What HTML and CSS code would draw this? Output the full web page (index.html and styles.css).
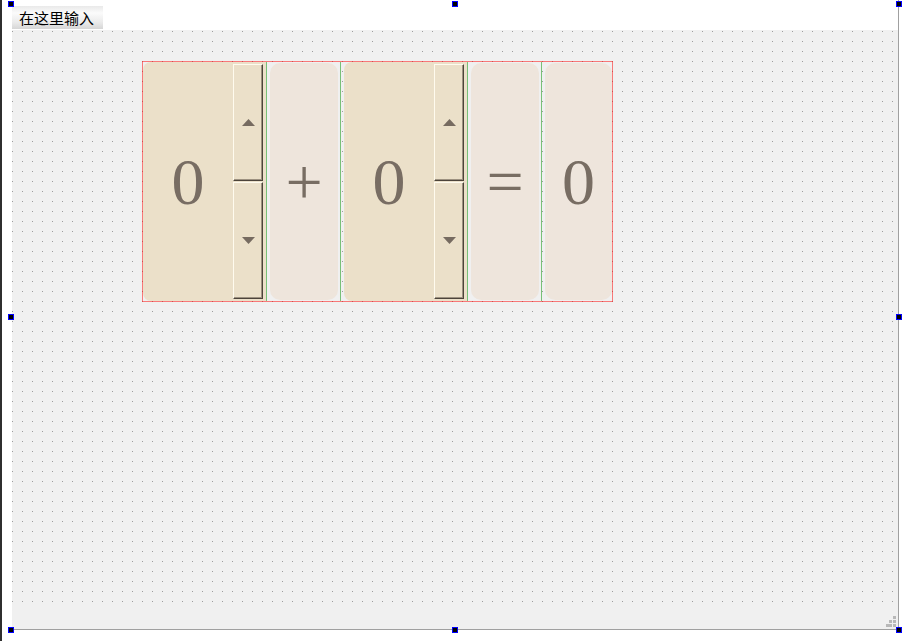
FILE: index.html
```html
<!DOCTYPE html>
<html>
<head>
<meta charset="utf-8">
<link rel="stylesheet" href="styles.css">
</head>
<body>
<div class="screen">
  <div class="edge"></div>
  <div class="canvas">
    <div class="form">
      <div class="menubar"><span class="menu-item">在这里输入</span></div>
      <div class="central">
        <div class="calc">
          <div class="spin">
            <div class="spin-text">0</div>
            <div class="spin-btns">
              <div class="spin-btn up"><svg width="13" height="7" viewBox="0 0 13 7"><polygon points="0,7 6.5,0 13,7" fill="#766b60"/></svg></div>
              <div class="spin-btn down"><svg width="13" height="7" viewBox="0 0 13 7"><polygon points="0,0 13,0 6.5,7" fill="#766b60"/></svg></div>
            </div>
          </div>
          <div class="vline"></div>
          <div class="gap g3"></div>
          <div class="label l68">+</div>
          <div class="gap g2"></div>
          <div class="vline"></div>
          <div class="gap g3"></div>
          <div class="spin">
            <div class="spin-text">0</div>
            <div class="spin-btns">
              <div class="spin-btn up"><svg width="13" height="7" viewBox="0 0 13 7"><polygon points="0,7 6.5,0 13,7" fill="#766b60"/></svg></div>
              <div class="spin-btn down"><svg width="13" height="7" viewBox="0 0 13 7"><polygon points="0,0 13,0 6.5,7" fill="#766b60"/></svg></div>
            </div>
          </div>
          <div class="vline"></div>
          <div class="gap g3"></div>
          <div class="label l68">=</div>
          <div class="gap g2"></div>
          <div class="vline"></div>
          <div class="gap g3"></div>
          <div class="label l67">0</div>
        </div>
      </div>
      <div class="statusbar">
        <svg class="grip" width="12" height="12" viewBox="0 0 12 12">
          <rect x="8" y="0" width="3" height="3" fill="#b8b8b8"/>
          <rect x="4" y="4" width="3" height="3" fill="#b8b8b8"/>
          <rect x="8" y="4" width="3" height="3" fill="#b8b8b8"/>
          <rect x="1" y="8" width="3" height="3" fill="#b8b8b8"/>
          <rect x="4" y="8" width="3" height="3" fill="#b8b8b8"/>
          <rect x="8" y="8" width="3" height="3" fill="#b8b8b8"/>
        </svg>
      </div>
    </div>
  </div>
  <div class="handle h-tl"></div>
  <div class="handle h-tm"></div>
  <div class="handle h-tr"></div>
  <div class="handle h-ml"></div>
  <div class="handle h-mr"></div>
  <div class="handle h-bl"></div>
  <div class="handle h-bm"></div>
  <div class="handle h-br"></div>
</div>
</body>
</html>
```
FILE: styles.css
```css
html, body {
  margin: 0;
  padding: 0;
  background: #ffffff;
}
.screen {
  position: relative;
  width: 905px;
  height: 641px;
  display: flex;
  overflow: hidden;
  background: #ffffff;
}
.edge {
  width: 2px;
  height: 641px;
  background: #2f2f2f;
  flex: none;
}
.canvas {
  flex: 1;
  padding-left: 10px;
}
.form {
  width: 886px;
  border-right: 1px solid #a0a0a0;
  border-bottom: 1px solid #a0a0a0;
  display: flex;
  flex-direction: column;
}
.menubar {
  height: 30px;
  background: #ffffff;
  display: flex;
  align-items: flex-start;
}
.menu-item {
  margin-top: 6px;
  width: 84px;
  height: 23px;
  padding-left: 7px;
  line-height: 23px;
  font-family: "Noto Sans CJK SC", "Noto Sans", sans-serif;
  font-size: 15px;
  color: #000;
  background: linear-gradient(to bottom, #e9e9e9 0%, #fbfbfb 30%, #ebebeb 70%, #d6d6d6 100%);
}
.central {
  height: 576px;
  background-color: #f0f0f0;
  background-image: conic-gradient(at 1px 1px, transparent 75%, #9c9c9c 0);
  background-size: 10px 10px;
  background-position: 0 1px;
}
.statusbar {
  position: relative;
  height: 23px;
  background: #f0f0f0;
}
.calc {
  margin-left: 130px;
  margin-top: 31px;
  width: 469px;
  height: 239px;
  border: 1px solid rgba(255, 0, 0, 0.5);
  background: transparent;
  display: flex;
}
.spin {
  display: flex;
  background: #ebe0c9;
  border-radius: 8px 0 0 8px;
  padding-right: 3px;
}
.spin-text {
  width: 90px;
  display: flex;
  align-items: center;
  justify-content: center;
  font-family: "Liberation Serif", serif;
  font-size: 66px;
  color: #786d63;
}
.spin-btns {
  width: 30px;
  margin-top: 2px;
  display: flex;
  flex-direction: column;
  gap: 1px;
}
.spin-btn {
  box-sizing: border-box;
  height: 117px;
  border-style: solid;
  border-width: 1px;
  border-color: #fffbee #4c443a #4c443a #fffbee;
  box-shadow: inset -1px -1px 0 #9c9180;
  display: flex;
  align-items: center;
  justify-content: center;
}
.spin-btn svg { display: block; }
.vline {
  width: 1px;
  background: #78c078;
  flex: none;
}
.gap { flex: none; }
.g2 { width: 2px; }
.g3 { width: 3px; }
.label {
  margin: 1px 0;
  background: #eee5dc;
  border-radius: 10px;
  display: flex;
  align-items: center;
  justify-content: center;
  font-family: "Liberation Serif", serif;
  font-size: 66px;
  color: #786d63;
}
.l68 { width: 68px; }
.l67 { width: 67px; }
.grip {
  position: absolute;
  right: 1px;
  bottom: 1px;
}
.handle {
  position: absolute;
  width: 4px;
  height: 4px;
  background: #000;
  border: 1px solid #0000ff;
}
.h-tl { left: 8px; top: 1px; }
.h-tm { left: 452px; top: 1px; }
.h-tr { left: 896px; top: 1px; }
.h-ml { left: 8px; top: 314px; }
.h-mr { left: 896px; top: 314px; }
.h-bl { left: 8px; top: 627px; }
.h-bm { left: 452px; top: 627px; }
.h-br { left: 896px; top: 627px; }
```
